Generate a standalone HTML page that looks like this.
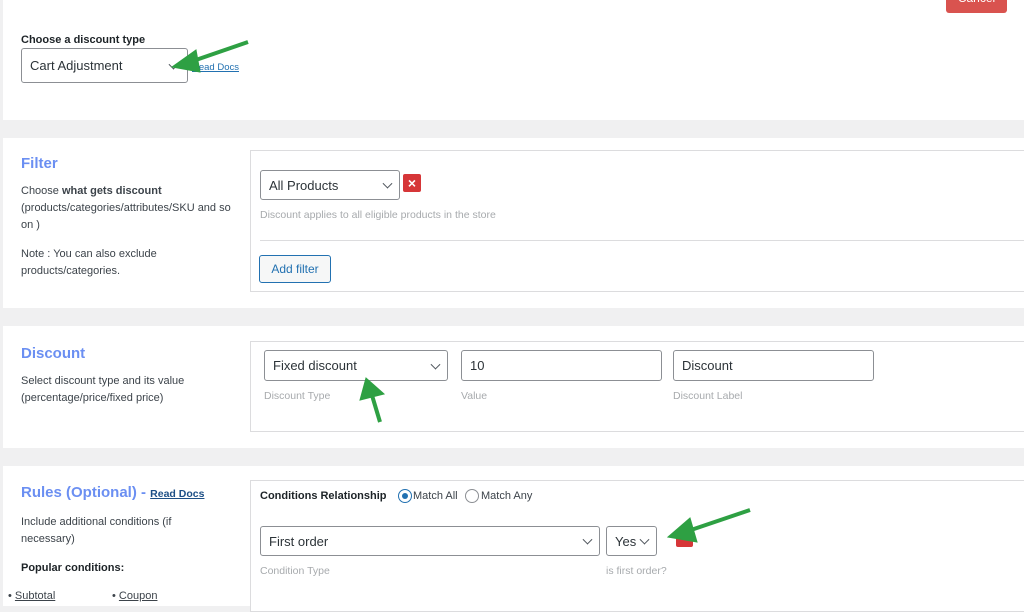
<!DOCTYPE html><html><head><style>
body{margin:0;width:1024px;height:604px;overflow:hidden;background:#f0f0f1;font-family:"Liberation Sans",sans-serif;color:#3c434a;position:relative}
.a{position:absolute}
.sec{position:absolute;left:3px;right:0;background:#fff}
.box{position:absolute;left:250px;width:790px;border:1px solid #dcdcde;background:#fff}
.sel{position:absolute;border:1px solid #8c8f94;border-radius:3px;background:#fff;font-size:13px;color:#2c3338;box-sizing:border-box;padding-left:8px;display:flex;align-items:center}
.chev{position:absolute;right:8px;top:50%;width:6px;height:6px;border-right:1.3px solid #50575e;border-bottom:1.3px solid #50575e;transform:translateY(-70%) rotate(45deg)}
.h{color:#6b8ff2;font-size:15px;font-weight:bold}
.t{font-size:11px;line-height:17px}
.hint{font-size:10.5px;color:#a7aaad}
a{color:#2271b1;text-decoration:underline}
</style></head><body>
<div class="sec" style="top:0;height:120px"></div>
<div class="sec" style="top:138px;height:170px"></div>
<div class="sec" style="top:326px;height:122px"></div>
<div class="sec" style="top:466px;height:140px"></div>
<div class="a" style="left:946px;top:-8px;width:61px;height:21px;background:#d9534f;border-radius:0 0 3px 3px;color:#fff;font-size:12px;text-align:center;line-height:12px">Cancel</div>

<div class="a t" style="left:21px;top:32px;font-weight:bold;color:#1d2327">Choose a discount type</div>
<div class="sel" style="left:21px;top:48px;width:167px;height:35px;font-size:13px">Cart Adjustment<span class="chev" style="right:10px"></span></div>
<a class="a" style="left:192px;top:62px;font-size:9.5px">Read Docs</a>

<div class="a h" style="left:21px;top:155px">Filter</div>
<div class="a t" style="left:21px;top:183px;width:220px">Choose <b>what gets discount</b> (products/categories/attributes/SKU and so on )</div>
<div class="a t" style="left:21px;top:246px;width:220px">Note : You can also exclude products/categories.</div>
<div class="box" style="top:150px;height:140px"></div>
<div class="sel" style="left:260px;top:170px;width:140px;height:30px">All Products<span class="chev"></span></div>
<div class="a" style="left:403px;top:174px;width:18px;height:18px;background:#d63638;border-radius:2px;color:#fff;font-size:14px;font-weight:bold;text-align:center;line-height:18px">×</div>
<div class="a hint" style="left:260px;top:209px">Discount applies to all eligible products in the store</div>
<div class="a" style="left:260px;top:240px;width:780px;border-top:1px solid #dcdcde"></div>
<div class="a" style="left:259px;top:255px;width:70px;height:26px;border:1px solid #2271b1;border-radius:3px;background:#f6f7f7;color:#2271b1;font-size:12px;text-align:center;line-height:26px">Add filter</div>

<div class="a h" style="left:21px;top:345px">Discount</div>
<div class="a t" style="left:21px;top:373px;width:200px">Select discount type and its value (percentage/price/fixed price)</div>
<div class="box" style="top:341px;height:89px"></div>
<div class="sel" style="left:264px;top:350px;width:184px;height:31px">Fixed discount<span class="chev"></span></div>
<div class="sel" style="left:461px;top:350px;width:201px;height:31px">10</div>
<div class="sel" style="left:673px;top:350px;width:201px;height:31px">Discount</div>
<div class="a hint" style="left:264px;top:390px">Discount Type</div>
<div class="a hint" style="left:461px;top:390px">Value</div>
<div class="a hint" style="left:673px;top:390px">Discount Label</div>

<div class="a h" style="left:21px;top:484px">Rules (Optional) - <a style="font-size:10.5px;color:#1d4f86">Read Docs</a></div>
<div class="a t" style="left:21px;top:514px;width:190px">Include additional conditions (if necessary)</div>
<div class="a t" style="left:21px;top:560px;font-weight:bold;color:#1d2327">Popular conditions:</div>
<div class="a t" style="left:8px;top:588px">• <u>Subtotal</u></div>
<div class="a t" style="left:112px;top:588px">• <u>Coupon</u></div>
<div class="box" style="top:480px;height:130px"></div>
<div class="a" style="left:260px;top:490px;font-size:11px;font-weight:bold;color:#1d2327">Conditions Relationship</div>
<div class="a" style="left:398px;top:489px;width:12px;height:12px;border:1px solid #2271b1;border-radius:50%"><div style="margin:3px;width:6px;height:6px;border-radius:50%;background:#2271b1"></div></div>
<div class="a" style="left:413px;top:490px;font-size:11px">Match All</div>
<div class="a" style="left:465px;top:489px;width:12px;height:12px;border:1px solid #8c8f94;border-radius:50%"></div>
<div class="a" style="left:481px;top:490px;font-size:11px">Match Any</div>
<div class="sel" style="left:260px;top:526px;width:340px;height:30px">First order<span class="chev"></span></div>
<div class="sel" style="left:606px;top:526px;width:51px;height:30px">Yes<span class="chev"></span></div>
<div class="a" style="left:676px;top:533px;width:17px;height:14px;background:#d63638;border-radius:2px"></div>
<div class="a hint" style="left:260px;top:565px">Condition Type</div>
<div class="a hint" style="left:606px;top:565px">is first order?</div>

<svg class="a" style="left:0;top:0" width="1024" height="604">
<g fill="#2ea043" stroke="#2ea043">
<line x1="248" y1="42" x2="190" y2="62" stroke-width="4"/><polygon points="172,67 196,50 200,72" stroke-width="1"/>
<line x1="380" y1="422" x2="371" y2="392" stroke-width="4"/><polygon points="366,378 360,400 384,394" stroke-width="1"/>
<line x1="750" y1="510" x2="688" y2="531" stroke-width="4"/><polygon points="668,537 690,518 697,542" stroke-width="1"/>
</g></svg>
</body></html>
